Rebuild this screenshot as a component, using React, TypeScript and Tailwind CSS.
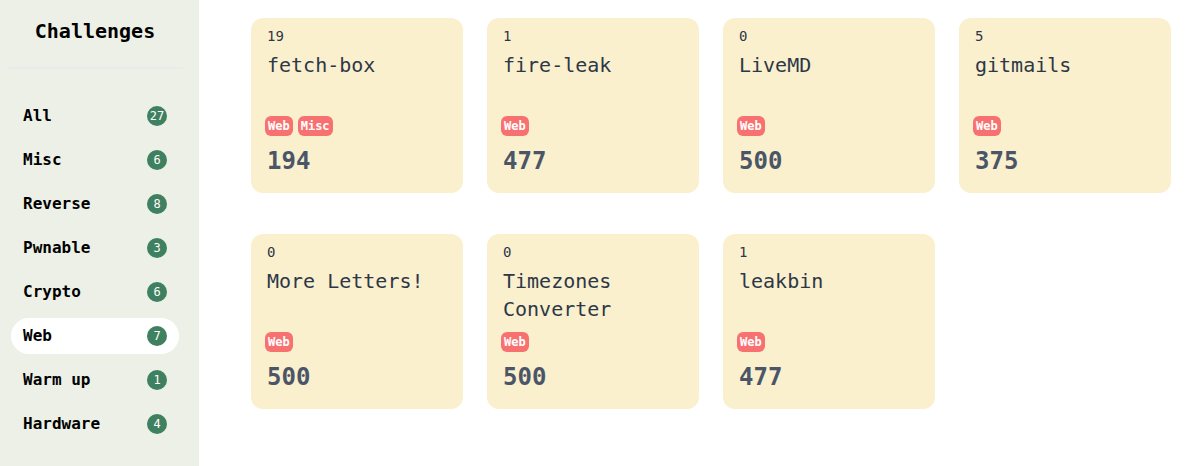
import React from "react";

const categories = [
  { name: "All", count: 27 },
  { name: "Misc", count: 6 },
  { name: "Reverse", count: 8 },
  { name: "Pwnable", count: 3 },
  { name: "Crypto", count: 6 },
  { name: "Web", count: 7 },
  { name: "Warm up", count: 1 },
  { name: "Hardware", count: 4 },
];

const challenges = [
  { solves: 19, name: "fetch-box", tags: ["Web", "Misc"], points: 194 },
  { solves: 1, name: "fire-leak", tags: ["Web"], points: 477 },
  { solves: 0, name: "LiveMD", tags: ["Web"], points: 500 },
  { solves: 5, name: "gitmails", tags: ["Web"], points: 375 },
  { solves: 0, name: "More Letters!", tags: ["Web"], points: 500 },
  { solves: 0, name: "Timezones Converter", tags: ["Web"], points: 500 },
  { solves: 1, name: "leakbin", tags: ["Web"], points: 477 },
];

function Sidebar() {
  return (
    <aside className="w-[199px] shrink-0 bg-[#edf0e6] pl-[7px] pr-4 min-h-[466px]">
      <h2 className="pt-4 text-center text-[20px] leading-[30px] font-bold text-black">
        Challenges
      </h2>
      <div className="mt-[21px] h-[2px] bg-[#e6ebee]" />
      <ul className="mt-[29px] px-1 flex flex-col gap-2">
        {categories.map((c) => (
          <li
            key={c.name}
            className={
              "h-9 flex items-center justify-between pl-3 pr-3 rounded-full " +
              (c.name === "Web" ? "bg-white" : "")
            }
          >
            <span className="text-[16px] font-bold text-black">{c.name}</span>
            <span className="w-5 h-5 rounded-full bg-[#3e8060] text-white text-[12px] flex items-center justify-center">
              {c.count}
            </span>
          </li>
        ))}
      </ul>
    </aside>
  );
}

function Card({ c }: { c: (typeof challenges)[number] }) {
  return (
    <div className="h-[175px] rounded-xl bg-[#faf0cd] px-4 pt-2 pb-4 flex flex-col">
      <div className="text-[14px] leading-5 text-[#2d3748]">{c.solves}</div>
      <div className="mt-[5px] text-[20px] leading-7 text-[#2d3748]">{c.name}</div>
      <div className="mt-auto flex gap-[5px] -ml-[2px]">
        {c.tags.map((t) => (
          <span
            key={t}
            className="h-5 px-[3px] rounded-md bg-[#f87171] text-white text-[12px] font-bold leading-5"
          >
            {t}
          </span>
        ))}
      </div>
      <div className="mt-[9px] text-[24px] leading-8 font-bold text-[#4a5568]">{c.points}</div>
    </div>
  );
}

export default function App() {
  return (
    <div
      className="flex w-[1190px] h-[466px] overflow-hidden bg-white"
      style={{ fontFamily: '"DejaVu Sans Mono", "Liberation Mono", monospace' }}
    >
      <Sidebar />
      <main className="flex-1 pl-[52px] pt-[18px]">
        <div className="grid grid-cols-[repeat(4,212px)] gap-x-6 gap-y-[41px]">
          {challenges.map((c) => (
            <Card key={c.name} c={c} />
          ))}
        </div>
      </main>
    </div>
  );
}
